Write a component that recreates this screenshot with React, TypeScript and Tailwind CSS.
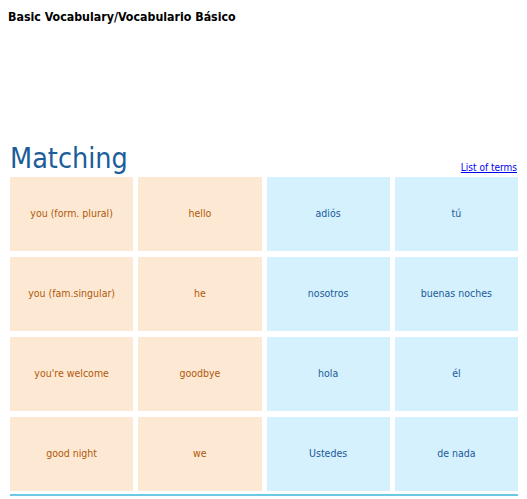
const cells: { text: string; side: "en" | "es" }[] = [
  { text: "you (form. plural)", side: "en" },
  { text: "hello", side: "en" },
  { text: "adiós", side: "es" },
  { text: "tú", side: "es" },
  { text: "you (fam.singular)", side: "en" },
  { text: "he", side: "en" },
  { text: "nosotros", side: "es" },
  { text: "buenas noches", side: "es" },
  { text: "you're welcome", side: "en" },
  { text: "goodbye", side: "en" },
  { text: "hola", side: "es" },
  { text: "él", side: "es" },
  { text: "good night", side: "en" },
  { text: "we", side: "en" },
  { text: "Ustedes", side: "es" },
  { text: "de nada", side: "es" },
];

export default function App() {
  return (
    <div className="min-h-screen bg-white font-['DejaVu_Sans_Condensed','DejaVu_Sans',sans-serif] text-black">
      {/* Page title */}
      <h1 className="px-[8px] pt-[10px] text-[12.3px] leading-[14px] font-bold">
        Basic Vocabulary/Vocabulario Básico
      </h1>

      {/* Matching card */}
      <div className="ml-[10px] mt-[120px] w-[508px]">
        <div className="flex items-end justify-between">
          <h2 className="text-[28.5px] leading-[30px] text-[#1b5d99]">Matching</h2>
          <a href="#" className="-mb-[1px] mr-[1px] text-[10px] text-[#0000ee] underline">
            List of terms
          </a>
        </div>

        <div className="mt-[3px] grid grid-cols-4 gap-x-[5px] gap-y-[6px]">
          {cells.map((c) => (
            <div
              key={c.text}
              className={
                c.side === "en"
                  ? "flex h-[74px] items-center justify-center bg-[#fde9d3] text-[10.5px] text-[#b0580a]"
                  : "flex h-[74px] items-center justify-center bg-[#d5f1fd] text-[10.5px] text-[#1a5a9a]"
              }
            >
              {c.text}
            </div>
          ))}
        </div>

        <div className="mt-[3px] h-[2px] bg-[#6cc9e3]" />
      </div>
    </div>
  );
}
